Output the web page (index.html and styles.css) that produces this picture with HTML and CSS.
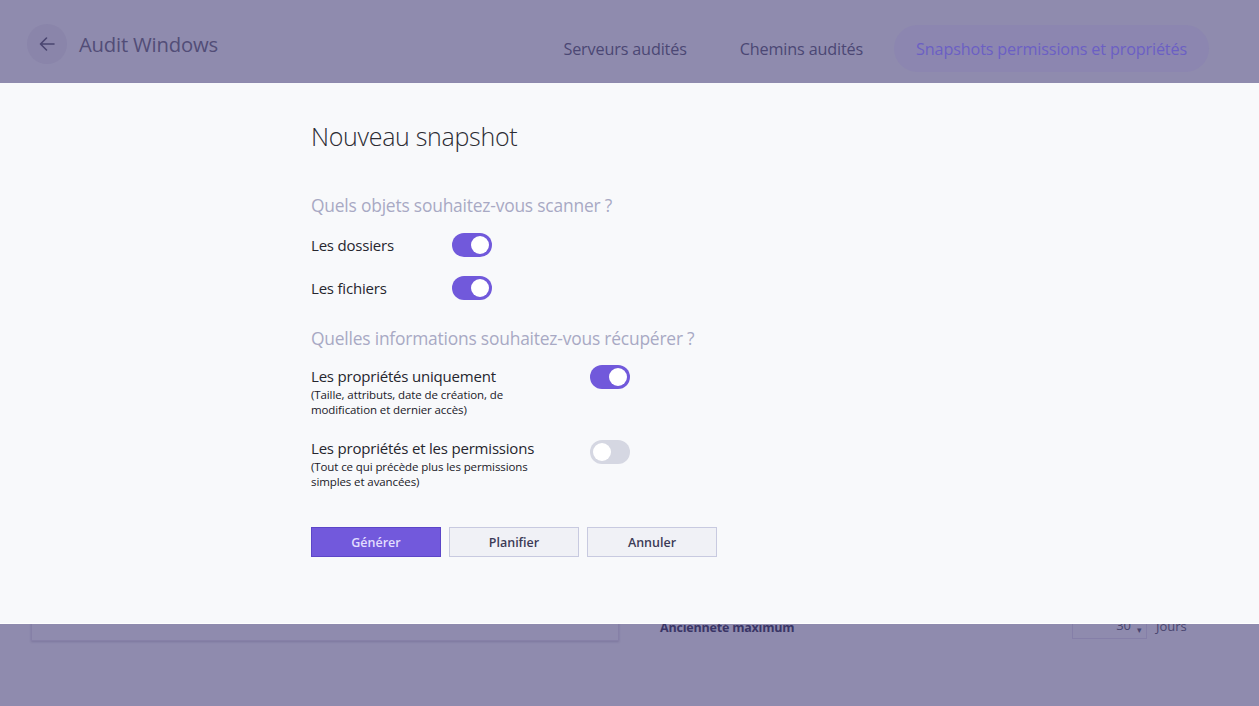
FILE: index.html
```html
<!DOCTYPE html>
<html lang="fr">
<head>
<meta charset="utf-8">
<title>Audit Windows - Nouveau snapshot</title>
<link rel="stylesheet" href="styles.css">
</head>
<body>
<div class="page">
  <header class="topbar">
    <div class="brand">
      <button class="back" aria-label="Retour">
        <svg width="20" height="20" viewBox="0 0 20 20"><path d="M17 10H3.5M9.5 4L3.5 10l6 6" fill="none" stroke="#4a4570" stroke-width="1.6" stroke-linecap="round" stroke-linejoin="round"/></svg>
      </button>
      <span class="app-title">Audit Windows</span>
    </div>
    <nav class="tabs">
      <a class="tab">Serveurs audités</a>
      <a class="tab">Chemins audités</a>
      <a class="tab active">Snapshots permissions et propriétés</a>
    </nav>
  </header>
  <main class="under">
    <div class="panel-box"></div>
    <div class="side">
      <div class="age-row">
        <span class="age-label">Ancienneté maximum</span>
        <span class="num-input"><span class="num">30</span><span class="spin">▾</span></span>
        <span class="unit">Jours</span>
      </div>
    </div>
  </main>
</div>

<section class="dialog">
  <div class="dialog-inner">
    <h1 class="dlg-title">Nouveau snapshot</h1>

    <h2 class="section">Quels objets souhaitez-vous scanner ?</h2>
    <div class="row short">
      <span class="label">Les dossiers</span>
      <span class="toggle on"><span class="knob"></span></span>
    </div>
    <div class="row short">
      <span class="label">Les fichiers</span>
      <span class="toggle on"><span class="knob"></span></span>
    </div>

    <h2 class="section s2">Quelles informations souhaitez-vous récupérer ?</h2>
    <div class="row long">
      <div class="label-block">
        <span class="label">Les propriétés uniquement</span>
        <span class="hint">(Taille, attributs, date de création, de modification et dernier accès)</span>
      </div>
      <span class="toggle on"><span class="knob"></span></span>
    </div>
    <div class="row long">
      <div class="label-block">
        <span class="label">Les propriétés et les permissions</span>
        <span class="hint">(Tout ce qui précède plus les permissions simples et avancées)</span>
      </div>
      <span class="toggle off"><span class="knob"></span></span>
    </div>

    <div class="actions">
      <button class="btn primary">Générer</button>
      <button class="btn">Planifier</button>
      <button class="btn">Annuler</button>
    </div>
  </div>
</section>
</body>
</html>
```
FILE: styles.css
```css
* { box-sizing: border-box; }
html, body { margin: 0; padding: 0; }
body {
  width: 1259px;
  height: 706px;
  overflow: hidden;
  background: #8f8bae;
  font-family: "Open Sans", "Noto Sans", sans-serif;
  position: relative;
}
.page { height: 706px; display: flex; flex-direction: column; }

.topbar {
  height: 83px;
  display: flex;
  align-items: flex-start;
  justify-content: space-between;
  padding: 0 50px 0 27px;
}
.brand { display: flex; align-items: center; height: 40px; margin-top: 24px; }
.back {
  width: 40px; height: 40px; border-radius: 50%;
  border: none; background: #8a85aa; padding: 0;
  display: flex; align-items: center; justify-content: center;
}
.app-title {
  margin-left: 12px;
  font-size: 20.3px;
  color: #524d77;
  font-weight: 400;
  letter-spacing: -0.2px;
}
.tabs { display: flex; gap: 9px; margin-top: 25px; }
.tab {
  height: 47px;
  padding: 0 22px;
  border-radius: 24px;
  display: flex; align-items: center;
  font-size: 16.2px;
  color: #4b4774;
  letter-spacing: -0.15px;
}
.tab.active { background: #8c86b0; color: #6b5fc4; }

.under {
  flex: 1;
  display: flex;
  padding: 0 0 0 31px;
}
.panel-box {
  width: 588px;
  height: 558px;
  border: 1px solid #8680a7;
  box-shadow: 0 1px 2px rgba(70,60,110,0.25);
}
.side { flex: 1; padding: 534px 0 0 41px; }
.age-row { display: flex; align-items: flex-start; }
.age-label {
  font-size: 12.5px; font-weight: 700; color: #3a3566;
  width: 412px; line-height: 18px; padding-top: 2px;
  letter-spacing: -0.2px;
}
.num-input {
  width: 75px; height: 22px;
  border: 1px solid #857fa8; border-top: none;
  display: flex; justify-content: flex-end; align-items: flex-start;
  padding-right: 4px; color: #4a4670; font-size: 13px;
}
.num { line-height: 16px; }
.spin { font-size: 9px; margin-left: 6px; margin-top: 6px; color: #4a4670; }
.unit { margin-left: 9px; font-size: 13px; color: #4a4670; line-height: 18px; }

.dialog {
  position: absolute;
  left: 0; top: 83px;
  width: 1259px; height: 540px;
  background: #f8f9fb;
  box-shadow: 0 1px 0 #ffffff;
}
.dialog-inner { padding: 36px 0 0 311px; }
.dlg-title {
  margin: 0;
  font-size: 25px;
  font-weight: 300;
  color: #2c2c33;
  line-height: 34px;
  letter-spacing: -0.3px;
}
.section {
  margin: 40px 0 16px;
  font-size: 17.4px;
  font-weight: 400;
  color: #a8a9c4;
  line-height: 24px;
  letter-spacing: -0.2px;
}
.section.s2 { margin-top: 17px; margin-bottom: 15px; }
.row { display: flex; align-items: flex-start; }
.row.short { height: 43px; align-items: center; margin-top: -10px; margin-bottom: 10px; }
.row.short .label { width: 141px; }
.label { font-size: 15px; color: #26262e; letter-spacing: -0.2px; }
.row.long { margin-bottom: 20px; }
.label-block { width: 279px; display: flex; flex-direction: column; }
.label-block .label { line-height: 22px; }
.hint { font-size: 11.5px; line-height: 15px; color: #202028; width: 220px; letter-spacing: -0.1px; }
.row.long .toggle { margin-top: 0; }
.row.long .toggle.off { margin-top: 3px; }

.toggle {
  width: 40px; height: 24px; border-radius: 12px;
  display: flex; align-items: center; padding: 0 3px;
  flex: none;
}
.toggle.on { background: #7159db; justify-content: flex-end; }
.toggle.off { background: #d5d7e2; justify-content: flex-start; }
.knob { width: 18px; height: 18px; border-radius: 50%; background: #ffffff; }

.actions { display: flex; gap: 8px; margin-top: 38px; }
.btn {
  width: 130px; height: 30px;
  font-family: "Open Sans", "Noto Sans", sans-serif;
  font-size: 12.5px; font-weight: 600;
  border: 1px solid #c8cae0;
  background: #f0f1f6;
  color: #3c3b57;
  padding: 0;
}
.btn.primary { background: #7259dc; border-color: #5c46c8; color: #e2ddff; }
```
